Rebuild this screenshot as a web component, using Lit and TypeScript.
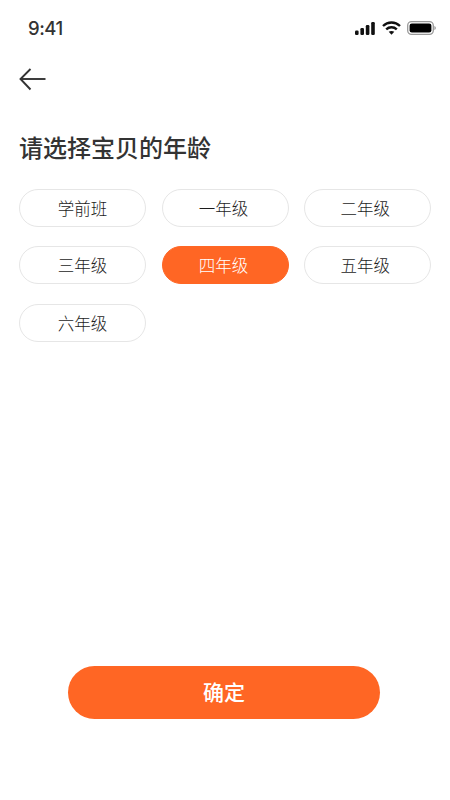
import { LitElement, html, css } from "lit";
import { customElement } from "lit/decorators.js";

const GRADES = ["学前班", "一年级", "二年级", "三年级", "四年级", "五年级", "六年级"];
const SELECTED = "四年级";

@customElement("app-root")
export class AppRoot extends LitElement {
  static styles = css`
    :host {
      display: block;
      width: 450px;
      height: 800px;
      background: #fff;
      font-family: "Noto Sans CJK SC", "Noto Sans", sans-serif;
      color: #333;
      overflow: hidden;
    }
    .page {
      height: 800px;
      display: flex;
      flex-direction: column;
      box-sizing: border-box;
    }
    .status {
      height: 55px;
      flex: none;
      box-sizing: border-box;
      padding: 18px 14.5px 0 28px;
      display: flex;
      justify-content: space-between;
      align-items: flex-start;
    }
    .time {
      font-family: Inter, "Liberation Sans", sans-serif;
      font-size: 18.5px;
      line-height: 20px;
      font-weight: 500;
      letter-spacing: -0.5px;
      color: #333;
    }
    .indicators {
      display: flex;
      align-items: center;
      gap: 5.8px;
      height: 20px;
    }
    .indicators svg { display: block; }
    .nav {
      height: 48px;
      flex: none;
      padding-left: 19px;
      display: flex;
      align-items: center;
    }
    .nav svg { display: block; }
    h1 {
      margin: 24px 0 0 19px;
      font-size: 24px;
      line-height: 40px;
      font-weight: 500;
      color: #333;
    }
    .grid {
      margin: 22px 19px 0;
      display: grid;
      grid-template-columns: repeat(3, 127px);
      column-gap: 15.6px;
      row-gap: 19.4px;
    }
    .chip {
      box-sizing: border-box;
      height: 38px;
      border: 1.5px solid #e6e6e6;
      border-radius: 19px;
      background: #fff;
      padding: 0;
      font: inherit;
      font-size: 16.5px;
      font-weight: 300;
      color: #1c1c1c;
      display: flex;
      align-items: center;
      justify-content: center;
    }
    .chip:nth-child(3n + 2) { padding-right: 3px; }
    .chip:nth-child(3n) { padding-right: 5px; }
    .chip.on {
      background: #ff6624;
      border-color: #ff6624;
      color: #fff;
    }
    .footer {
      margin-top: auto;
      padding: 0 70px 81px 68px;
    }
    .confirm {
      width: 100%;
      height: 53px;
      border: none;
      border-radius: 27px;
      background: #ff6624;
      color: #fff;
      font: inherit;
      font-size: 21px;
      font-weight: 500;
      line-height: 50px;
      padding: 0 0 4px;
      display: flex;
      align-items: center;
      justify-content: center;
    }
  `;

  render() {
    return html`
      <div class="page">
        <div class="status">
          <span class="time">9:41</span>
          <div class="indicators">
            <svg width="21" height="13" viewBox="0 0 21 13" fill="#111">
              <rect x="0" y="8.5" width="3.6" height="4.5" rx="1.2"></rect>
              <rect x="5.4" y="6" width="3.6" height="7" rx="1.2"></rect>
              <rect x="10.8" y="3" width="3.6" height="10" rx="1.2"></rect>
              <rect x="16.2" y="0" width="3.6" height="13" rx="1.2"></rect>
            </svg>
            <svg width="19" height="14" viewBox="0 0 19 14" fill="none" stroke="#111" stroke-width="2.4">
              <path d="M1 5 C5.8 0.4 13.2 0.4 18 5"></path>
              <path d="M4.2 8.4 C7.2 5.6 11.8 5.6 14.8 8.4"></path>
              <path d="M9.5 13.8 L6.7 10.8 C8.4 9.6 10.6 9.6 12.3 10.8 Z" fill="#111" stroke="none"></path>
            </svg>
            <svg width="29" height="14" viewBox="0 0 29 14" fill="none">
              <rect x="0.7" y="0.7" width="25.6" height="12.6" rx="3.8" stroke="#999" stroke-width="1.3"></rect>
              <rect x="2.6" y="2.6" width="21.8" height="8.8" rx="2.2" fill="#000"></rect>
              <path d="M27.4 5 C28.2 5.3 28.8 6 28.8 7 C28.8 8 28.2 8.7 27.4 9 Z" fill="#999"></path>
            </svg>
          </div>
        </div>
        <div class="nav">
          <svg width="28" height="24" viewBox="0 0 28 24" fill="none" stroke="#333" stroke-width="1.9">
            <path d="M1.5 12 H26.5"></path>
            <path d="M11.5 2 L1.5 12 L11.5 22.5"></path>
          </svg>
        </div>
        <h1>请选择宝贝的年龄</h1>
        <div class="grid">
          ${GRADES.map(
            (g) => html`<button class="chip ${g === SELECTED ? "on" : ""}">${g}</button>`
          )}
        </div>
        <div class="footer">
          <button class="confirm">确定</button>
        </div>
      </div>
    `;
  }
}
